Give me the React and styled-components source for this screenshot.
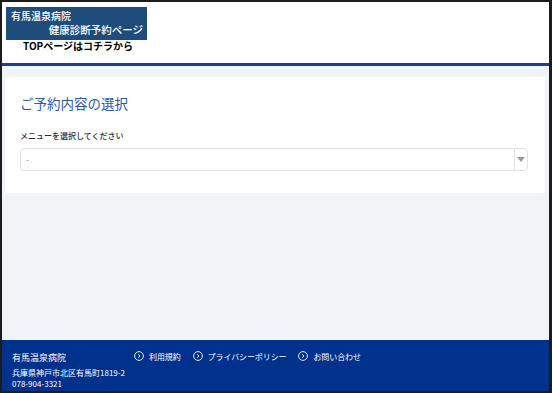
import React from 'react';
import styled, { createGlobalStyle } from 'styled-components';

const GlobalStyle = createGlobalStyle`
  html, body {
    margin: 0;
    padding: 0;
  }
  body {
    font-family: "Noto Sans CJK JP", "Noto Sans", sans-serif;
    background: #1a1a1a;
  }
`;

const Frame = styled.div`
  box-sizing: border-box;
  width: 552px;
  height: 393px;
  border: 2px solid #1c1c1c;
  border-right-width: 3px;
  display: flex;
  flex-direction: column;
  background: #f0f4f9;
`;

const Header = styled.header`
  height: 64px;
  box-sizing: border-box;
  background: #fff;
  border-bottom: 3px solid #1c3f91;
  padding: 5px 0 0 4px;
  display: flex;
  align-items: flex-start;
  flex-shrink: 0;
`;

const LogoLink = styled.a`
  display: flex;
  flex-direction: column;
  align-items: center;
  text-decoration: none;
  color: #000;
`;

const LogoBox = styled.div`
  width: 141px;
  height: 33px;
  box-sizing: border-box;
  background: #1e4d7c;
  color: #fff;
  padding: 2px 4px 0 5px;
  display: flex;
  flex-direction: column;
  line-height: 14px;
  font-weight: 500;
`;

const LogoName = styled.span`
  font-size: 10px;
`;

const LogoSub = styled.span`
  font-size: 10.5px;
  align-self: flex-end;
`;

const TopLink = styled.span`
  font-size: 10px;
  font-weight: 700;
  line-height: 12px;
  padding-left: 3px;
`;

const Main = styled.main`
  flex: 1;
  padding: 11px 4px 0 3px;
`;

const Card = styled.section`
  background: #fff;
  border-radius: 3px;
  height: 116px;
  box-sizing: border-box;
  padding: 16px 17px 0 15px;
`;

const Title = styled.h2`
  margin: 0;
  font-size: 13.5px;
  font-weight: 400;
  color: #2a57a6;
  line-height: 20px;
`;

const Label = styled.label`
  display: block;
  margin-top: 17px;
  font-size: 8px;
  font-weight: 500;
  color: #2a2a2a;
  line-height: 12px;
`;

const SelectBox = styled.div`
  margin-top: 6px;
  height: 23px;
  box-sizing: border-box;
  border: 1px solid #e2e2e2;
  border-radius: 4px;
  display: flex;
  align-items: center;
`;

const SelectValue = styled.span`
  flex: 1;
  padding-left: 5px;
  font-size: 8px;
  color: #777;
`;

const ArrowCell = styled.span`
  width: 12px;
  height: 100%;
  border-left: 1px solid #e2e2e2;
  display: flex;
  align-items: center;
  justify-content: center;
`;

const Arrow = styled.span`
  width: 0;
  height: 0;
  border-left: 4px solid transparent;
  border-right: 4px solid transparent;
  border-top: 5px solid #9a9a9a;
`;

const Footer = styled.footer`
  height: 51px;
  box-sizing: border-box;
  background: #00318c;
  color: #fff;
  display: flex;
  padding: 11px 0 0 10px;
  flex-shrink: 0;
`;

const Address = styled.div`
  width: 122px;
  display: flex;
  flex-direction: column;
`;

const FooterName = styled.span`
  font-size: 9px;
  line-height: 14px;
  margin-bottom: 2px;
`;

const FooterLine = styled.span`
  font-size: 8px;
  line-height: 11px;
`;

const Links = styled.nav`
  display: flex;
  gap: 12px;
  height: 14px;
  align-items: center;
  margin-top: -2px;
`;

const FooterLink = styled.a`
  display: flex;
  align-items: center;
  gap: 5px;
  color: #fff;
  text-decoration: none;
  font-size: 8px;
  letter-spacing: -0.1px;
`;

const CircleIcon = () => (
  <svg width="10" height="10" viewBox="0 0 10 10" fill="none" stroke="#fff">
    <circle cx="5" cy="5" r="4.4" strokeWidth="0.9" />
    <path d="M4.2 3.2 L6 5 L4.2 6.8" strokeWidth="0.9" />
  </svg>
);

const links = ['利用規約', 'プライバシーポリシー', 'お問い合わせ'];

export default function App() {
  return (
    <>
      <GlobalStyle />
      <Frame>
        <Header>
          <LogoLink href="#">
            <LogoBox>
              <LogoName>有馬温泉病院</LogoName>
              <LogoSub>健康診断予約ページ</LogoSub>
            </LogoBox>
            <TopLink>TOPページはコチラから</TopLink>
          </LogoLink>
        </Header>
        <Main>
          <Card>
            <Title>ご予約内容の選択</Title>
            <Label>メニューを選択してください</Label>
            <SelectBox>
              <SelectValue>-</SelectValue>
              <ArrowCell>
                <Arrow />
              </ArrowCell>
            </SelectBox>
          </Card>
        </Main>
        <Footer>
          <Address>
            <FooterName>有馬温泉病院</FooterName>
            <FooterLine>兵庫県神戸市北区有馬町1819-2</FooterLine>
            <FooterLine>078-904-3321</FooterLine>
          </Address>
          <Links>
            {links.map((l) => (
              <FooterLink href="#" key={l}>
                <CircleIcon />
                {l}
              </FooterLink>
            ))}
          </Links>
        </Footer>
      </Frame>
    </>
  );
}
